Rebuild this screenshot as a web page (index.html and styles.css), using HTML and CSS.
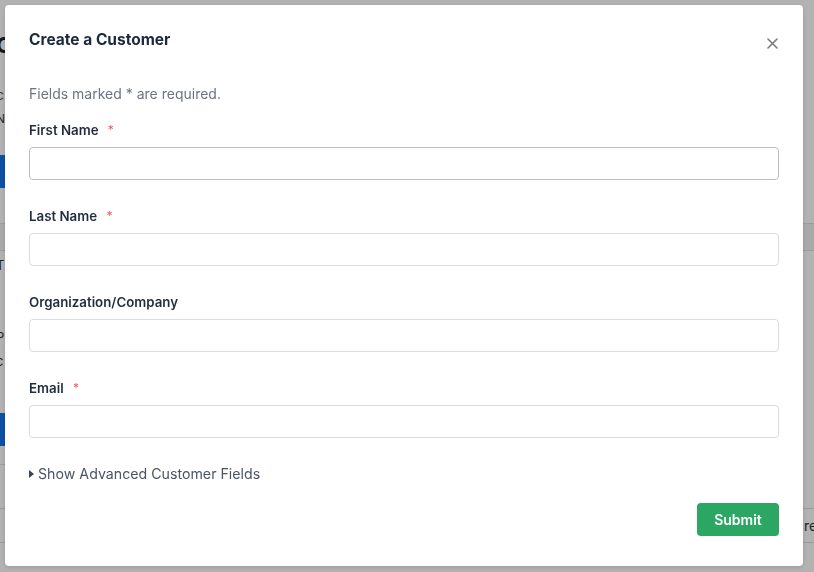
FILE: index.html
```html
<!DOCTYPE html>
<html lang="en">
<head>
<meta charset="utf-8">
<title>Create a Customer</title>
<link rel="stylesheet" href="styles.css">
</head>
<body>
<div class="page">
  <div class="page-head">
    <h1 class="page-title">C</h1>
    <p class="page-sub">c</p>
    <p class="page-meta">N</p>
    <div class="page-btn"></div>
  </div>
  <div class="table">
    <div class="thead"></div>
    <div class="trow"><span>T</span></div>
    <div class="trow trow-low"><span>P</span></div>
    <div class="trow"><span>c</span></div>
    <div class="page-btn"></div>
    <div class="tfoot"></div>
  </div>
  <div class="side-cell"><span>re</span></div>
</div>

<div class="overlay">
  <div class="modal" role="dialog" aria-labelledby="modal-title">
    <div class="modal-header">
      <h2 class="modal-title" id="modal-title">Create a Customer</h2>
      <button class="close" aria-label="Close">
        <svg width="11" height="11" viewBox="0 0 11 11"><path d="M1 1 L10 10 M10 1 L1 10" stroke="#7a7a7a" stroke-width="1.6" stroke-linecap="round"/></svg>
      </button>
    </div>
    <form class="modal-body">
      <p class="hint">Fields marked * are required.</p>
      <div class="field">
        <label class="label">First Name <span class="req">*</span></label>
        <input class="input input-focus" type="text">
      </div>
      <div class="field">
        <label class="label">Last Name <span class="req">*</span></label>
        <input class="input" type="text">
      </div>
      <div class="field">
        <label class="label">Organization/Company</label>
        <input class="input" type="text">
      </div>
      <div class="field">
        <label class="label">Email <span class="req">*</span></label>
        <input class="input" type="text">
      </div>
      <div class="advanced"><span class="caret"></span>Show Advanced Customer Fields</div>
      <div class="actions">
        <button type="button" class="submit">Submit</button>
      </div>
    </form>
  </div>
</div>
</body>
</html>
```

FILE: styles.css
```css
* { box-sizing: border-box; }
html, body { margin: 0; padding: 0; }
body {
  width: 814px;
  height: 572px;
  overflow: hidden;
  background: #ffffff;
  font-family: Inter, "Liberation Sans", sans-serif;
  color: #1f2d3d;
}

/* background page (dimmed) */
.page { margin-left: -4px; padding-top: 30px; }
.page-title { margin: 0; font-size: 22px; line-height: 30px; font-weight: 700; color: #222; }
.page-sub { margin: 25px 0 0; font-size: 14px; line-height: 20px; color: #555; }
.page-meta { margin: 6px 0 0; font-size: 12px; line-height: 16px; color: #444; }
.page-btn { margin-top: 28px; width: 80px; height: 33px; background: #1273eb; border-radius: 4px; }
.table { margin-top: 35px; }
.table .page-btn { margin-top: 18px; }
.thead { height: 28px; background: #f3f3f3; border-top: 1px solid #ddd; border-bottom: 1px solid #ddd; }
.trow { height: 48px; font-size: 13px; padding-top: 6px; color: #333; }
.trow-low { padding-top: 30px; }
.tfoot { margin-top: 18px; width: 120px; border-top: 1px solid #ddd; height: 1px; }
.side-cell { margin: 43px 0 0 0; border-top: 1px solid #ddd; border-bottom: 1px solid #ddd; height: 35px; display: flex; justify-content: flex-end; align-items: center; font-size: 14px; color: #333; }
.side-cell span { width: 10px; overflow: hidden; white-space: nowrap; }

/* overlay + modal */
.overlay {
  position: fixed;
  inset: 0;
  background: rgba(0, 0, 0, 0.3);
  padding: 5px 0 0 5px;
}
.modal {
  width: 798px;
  height: 561px;
  background: #fff;
  border-radius: 4px;
  box-shadow: 0 1px 4px rgba(0,0,0,0.15);
  display: flex;
  flex-direction: column;
}
.modal-header {
  display: flex;
  justify-content: space-between;
  align-items: flex-start;
  padding: 24px 24px 0 24px;
}
.modal-title {
  margin: 0;
  font-size: 15.5px;
  line-height: 22px;
  font-weight: 700;
  color: #1c2a3e;
}
.close {
  border: 0;
  background: none;
  padding: 0;
  margin: 9px 1px 0 0;
  width: 11px;
  height: 11px;
  display: flex;
}
.modal-body {
  flex: 1;
  display: flex;
  flex-direction: column;
  padding: 33px 24px 30px 24px;
  margin: 0;
}
.hint { margin: 0; font-size: 14px; line-height: 20px; color: #6b7480; }
.field { margin-top: 17px; display: flex; flex-direction: column; }
.field + .field { margin-top: 27px; }
.label { display: block; height: 18px; font-size: 13.3px; line-height: 18px; font-weight: 600; color: #1f2d3d; margin-bottom: 8px; }
.req { color: #f0595b; font-weight: 400; margin-left: 6px; font-size: 12px; line-height: 1; vertical-align: 1px; }
.input {
  width: 100%;
  height: 33px;
  border: 1px solid #dcdcdc;
  border-radius: 4px;
  background: #fff;
  font: inherit;
}
.input-focus { border-color: #bdbdbd; }
.advanced {
  margin-top: 26px;
  font-size: 14.2px;
  line-height: 20px;
  color: #4a5464;
  display: flex;
  align-items: center;
}
.caret {
  width: 0; height: 0;
  border-top: 4px solid transparent;
  border-bottom: 4px solid transparent;
  border-left: 5px solid #3a4454;
  margin-right: 4px;
}
.actions { margin-top: auto; display: flex; justify-content: flex-end; }
.submit {
  width: 82px;
  height: 33px;
  border: 0;
  border-radius: 4px;
  background: #2ba763;
  color: #fff;
  font-family: inherit;
  font-size: 14px;
  font-weight: 600;
}
```
